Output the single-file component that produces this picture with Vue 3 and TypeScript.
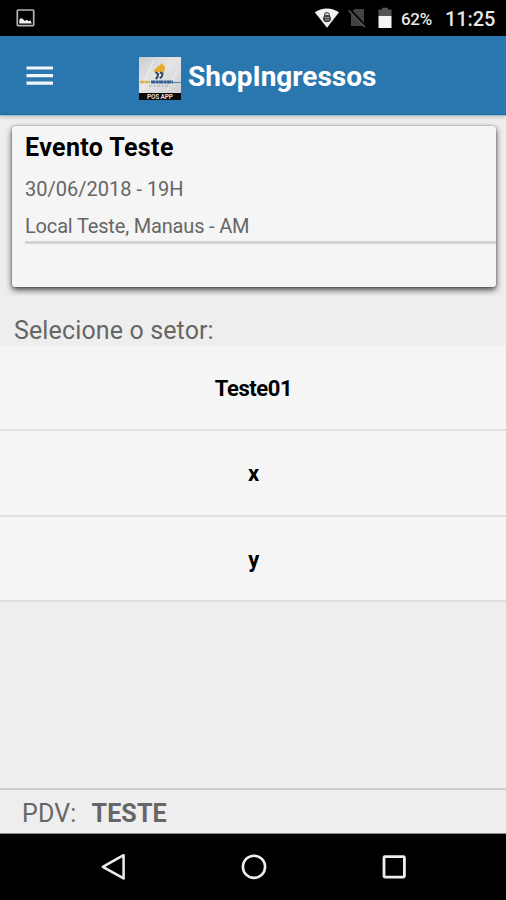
<script setup lang="ts">
interface Sector {
  id: number
  name: string
}

const event = {
  title: 'Evento Teste',
  date: '30/06/2018 - 19H',
  place: 'Local Teste, Manaus - AM',
}

const sectors: Sector[] = [
  { id: 1, name: 'Teste01' },
  { id: 2, name: 'x' },
  { id: 3, name: 'y' },
]

const pointOfSale = 'TESTE'
</script>

<template>
  <div class="screen">
    <div class="status-bar">
      <svg class="picture-icon" width="20" height="18" viewBox="0 0 20 18">
        <rect x="1.3" y="1" width="16.4" height="15.6" rx="0.8" fill="none" stroke="#b4b4b4" stroke-width="1.7" />
        <path d="M3.3 14.6V11l1.5-2 2 1 2 2.1 2-1.3 1.9 1.4 1.7-1 1.4 3.4z" fill="#f4f4f4" />
      </svg>
      <svg class="wifi-icon" width="26" height="21" viewBox="0 0 26 21">
        <path d="M.8 4.3C7.5-.8 18.2-.8 25 4.3L13 19.8z" fill="#f2f2f2" />
        <path d="M10.6 8.3V7a2.4 2.4 0 0 1 4.8 0v1.3" fill="none" stroke="#555" stroke-width="1.2" />
        <ellipse cx="13" cy="10.5" rx="4" ry="3.8" fill="#444" />
        <path d="M10.8 9.6h4.4M11 11.7h4" stroke="#aaa" stroke-width=".8" />
      </svg>
      <svg class="sim-icon" width="20" height="22" viewBox="0 0 20 22">
        <path d="M6.5 2H16v17H3V6z" fill="#434343" />
        <path d="M1.8 2.3l15.8 17" stroke="#000" stroke-width="2.2" />
        <path d="M.5 3.2l16.6 17" stroke="#555" stroke-width="1.5" />
      </svg>
      <svg class="battery-icon" width="14" height="22" viewBox="0 0 14 22">
        <path d="M.5 2.5H4V.7h6v1.8h3.5V10H.5z" fill="#555" />
        <path d="M.5 9h13v12H.5z" fill="#f4f4f4" />
      </svg>
      <span class="battery-level">62%</span>
      <span class="clock">11:25</span>
    </div>

    <header class="app-bar">
      <svg class="menu-icon" width="27" height="20" viewBox="0 0 27 20">
        <path d="M.5 2h26.5M.5 9.6h26.5M.5 17.2h26.5" stroke="#f0f6fa" stroke-width="3.2" />
      </svg>
      <svg class="logo" width="42" height="43" viewBox="0 0 42 43">
        <defs>
          <linearGradient id="paper" x1="0" y1="0" x2="1" y2="1">
            <stop offset="0" stop-color="#c9cccd" />
            <stop offset=".45" stop-color="#e5e5e6" />
            <stop offset="1" stop-color="#d1d1d3" />
          </linearGradient>
        </defs>
        <rect width="42" height="36" fill="url(#paper)" />
        <path d="M2 32L15 3M28 34L39 13" stroke="#eeeeee" stroke-width="2" opacity=".6" />
        <path d="M14.5 13.5l5-4.5 4-3 2.8 5-1.8 5-4-1.3-3.5 1.5z" fill="#e5ac2d" />
        <path d="M16.5 15l2.5 2-.5 3-1.7 2M21 15.5l2.5 1-.5 2.5-2 2.5" fill="none" stroke="#33476b" stroke-width="2" />
        <path d="M1 25h10" stroke="#dfae48" stroke-width="2.6" stroke-dasharray="4 .4" />
        <path d="M12 25h22" stroke="#315d91" stroke-width="3" stroke-dasharray="4.5 .4 2.8 .3" />
        <path d="M34 25.5h8" stroke="#6188af" stroke-width="1.2" />
        <path d="M10 29h21" stroke="#858a90" stroke-width=".6" stroke-dasharray="3 1" />
        <rect y="36" width="42" height="7" fill="#080808" />
        <text x="21" y="42" text-anchor="middle" textLength="26" class="logo-text">POS APP</text>
      </svg>
      <h1 class="app-title">ShopIngressos</h1>
    </header>

    <main class="content">
      <section class="event-card">
        <h2 class="event-title">{{ event.title }}</h2>
        <p class="event-date">{{ event.date }}</p>
        <p class="event-place">{{ event.place }}</p>
      </section>
      <p class="prompt">Selecione o setor:</p>
      <ul class="sector-list">
        <li v-for="sector in sectors" :key="sector.id" class="sector">{{ sector.name }}</li>
      </ul>
    </main>

    <footer class="pos-bar">
      <span class="pos-label">PDV:</span>
      <strong class="pos-name">{{ pointOfSale }}</strong>
    </footer>

    <nav class="nav-bar">
      <svg width="28" height="30" viewBox="0 0 28 30">
        <path d="M2.8 14.8L23.6 3.2v23.2z" fill="none" stroke="#eee" stroke-width="2.5" stroke-linejoin="round" />
      </svg>
      <svg width="28" height="30" viewBox="0 0 28 30">
        <circle cx="14" cy="14.8" r="11.1" fill="none" stroke="#eee" stroke-width="2.6" />
      </svg>
      <svg width="28" height="30" viewBox="0 0 28 30">
        <rect x="4" y="4.7" width="20.4" height="20.4" rx="1" fill="none" stroke="#eee" stroke-width="2.8" />
      </svg>
    </nav>
  </div>
</template>

<style>
body {
  margin: 0;
  overflow: hidden;
}
</style>

<style scoped>
.screen {
  width: 506px;
  height: 900px;
  display: flex;
  flex-direction: column;
  background: #eee;
  font-family: Roboto, sans-serif;
  overflow: hidden;
}
.screen * {
  box-sizing: border-box;
}
h1,
h2,
p,
ul {
  margin: 0;
  padding: 0;
}
.status-bar {
  flex: none;
  height: 36px;
  display: flex;
  align-items: center;
  padding-left: 16px;
  background: #000;
  color: #e6e6e6;
}
.wifi-icon {
  margin-left: 278px;
}
.sim-icon {
  margin-left: 8px;
}
.battery-icon {
  margin-left: 10px;
}
.battery-level {
  width: 44px;
  margin-left: 9px;
  padding-top: 2px;
  font-size: 17px;
  line-height: 20px;
  font-weight: 500;
  letter-spacing: -0.3px;
}
.clock {
  padding-top: 2px;
  font-size: 20px;
  line-height: 22px;
  font-weight: 500;
  letter-spacing: -0.1px;
}
.app-bar {
  position: relative;
  flex: none;
  height: 79px;
  display: flex;
  align-items: center;
  padding: 2px 0 0 26px;
  background: #2a76af;
  border-bottom: 1px solid #1d6697;
  box-shadow: 0 1px 0 #a3c4d6, 0 2px 4px rgba(0, 0, 0, 0.22);
}
.logo {
  margin-left: 86px;
  margin-top: 4px;
}
.logo-text {
  fill: #ddd;
  font-size: 6.5px;
  font-weight: 700;
}
.app-title {
  margin-left: 7px;
  padding-top: 2px;
  color: #fff;
  font-size: 28px;
  line-height: 34px;
  font-weight: 700;
}
.content {
  flex: 1;
  padding-top: 11px;
}
.event-card {
  height: 161px;
  margin: 0 10px 0 12px;
  padding: 6px 0 0 13px;
  border-radius: 3px;
  background: #f5f5f5;
  box-shadow: 0 0 2px rgba(0, 0, 0, 0.4), 0 3px 6px rgba(0, 0, 0, 0.7);
}
.event-title {
  color: #000;
  font-size: 25px;
  line-height: 32px;
  font-weight: 700;
  letter-spacing: 0.38px;
}
.event-date,
.event-place {
  color: #666;
  font-size: 20px;
}
.event-date {
  padding-top: 12px;
  line-height: 26px;
}
.event-place {
  padding-top: 12px;
  height: 42px;
  line-height: 25px;
  letter-spacing: -0.17px;
  border-bottom: 3px solid #d4d4d4;
}
.prompt {
  height: 59px;
  padding: 29px 0 0 14px;
  color: #666;
  font-size: 25px;
  line-height: 30px;
  letter-spacing: 0.13px;
}
.sector-list {
  list-style: none;
}
.sector {
  height: 85.3px;
  display: flex;
  align-items: center;
  justify-content: center;
  padding: 2px 0 0 1px;
  border-bottom: 2px solid #e0e0e0;
  background: #f5f5f5;
  color: #000;
  font-size: 22px;
  font-weight: 700;
  letter-spacing: -0.4px;
}
.pos-bar {
  flex: none;
  height: 46px;
  display: flex;
  align-items: center;
  gap: 15px;
  padding: 3px 0 0 22px;
  border-top: 2px solid #ccc;
  border-bottom: 1px solid #888;
  color: #666;
  font-size: 25px;
  letter-spacing: 0.15px;
}
.nav-bar {
  flex: none;
  height: 66px;
  display: flex;
  justify-content: center;
  align-items: center;
  gap: 112px;
  padding-left: 2px;
  background: #000;
}
</style>
